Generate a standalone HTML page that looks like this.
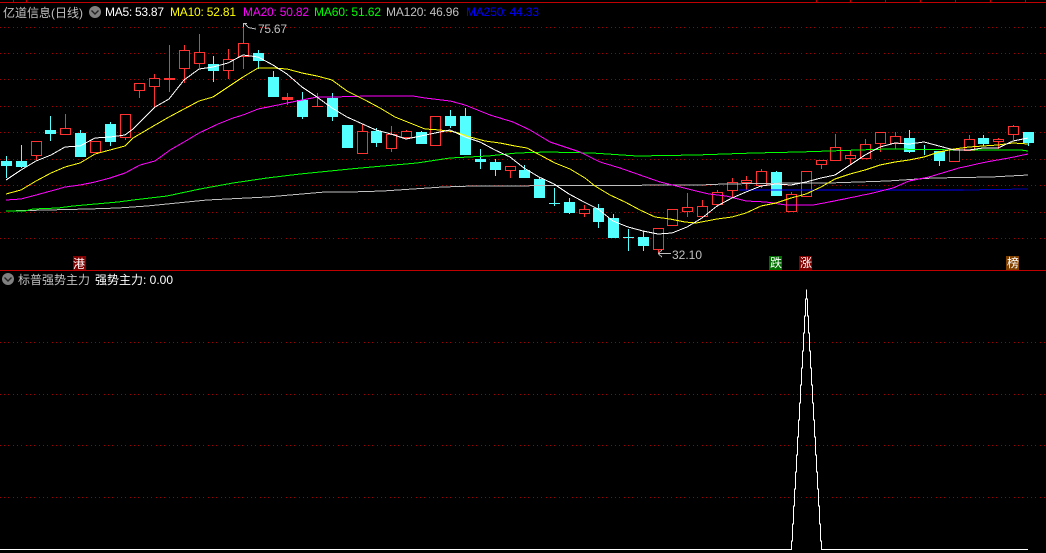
<!DOCTYPE html>
<html><head><meta charset="utf-8"><style>
html,body{margin:0;padding:0;background:#000;width:1046px;height:553px;overflow:hidden}
svg{display:block;position:absolute;left:0;top:0}
text{font-family:"Liberation Sans","WenQuanYi Zen Hei","Noto Sans CJK SC",sans-serif;font-size:12px}
</style></head><body>
<svg width="1046" height="553" viewBox="0 0 1046 553">
<rect width="1046" height="553" fill="#000"/>
<g stroke="#a00000" stroke-width="1" stroke-dasharray="1 3 1 3 1 4" shape-rendering="crispEdges" fill="none">
<path d="M0 27.5H1046M0 53.5H1046M0 79.5H1046M0 106.5H1046M0 132.5H1046M0 159.5H1046M0 185.5H1046M0 212.5H1046M0 238.5H1046M0 342.5H1046M0 394.5H1046M0 445.5H1046M0 497.5H1046"/>
</g>
<g stroke="#c00000" stroke-width="1" shape-rendering="crispEdges" fill="none">
<path d="M0 2.5H1046M0 270.5H1046M816.5 0V2M850.5 0V2M885.5 0V2M920.5 0V2M955.5 0V2M990.5 0V2M1025.5 0V2M13.5 0V2M26.5 0V2"/>
</g>
<g shape-rendering="crispEdges" stroke-width="1">
<path fill="none" stroke="#ff3232" d="M36.5 156V160M65.5 114V128M125.5 138V140M139.5 91V98M154.5 74V108M169.5 45V92M184.5 45V83M199.5 34V68M228.5 49V79M243.5 23V69M287.5 93V105M317.5 93V107M362.5 124V131M391.5 126V152M406.5 130V139M510.5 171V178M584.5 205V217M658.5 250V253M687.5 193V217M702.5 200V206M717.5 190V207M732.5 178V198M746.5 176V190M761.5 169V188M791.5 192V194M821.5 165V169M835.5 134V147M850.5 151V165M865.5 139V144M880.5 144V152M895.5 132V149M969.5 135V139M998.5 138V149M1013.5 125V140"/>
<path fill="none" stroke="#54ffff" d="M6.5 156V178M21.5 145V168M50.5 116V141M80.5 130V134M110.5 122V146M213.5 56V82M258.5 50V69M273.5 71V78M302.5 92V119M332.5 93V121M376.5 128V147M421.5 131V133M450.5 110V128M465.5 108V155M480.5 149V169M495.5 159V176M524.5 165V171M539.5 177V180M554.5 188V206M569.5 198V214M598.5 204V228M613.5 214V219M628.5 229V251M643.5 231V251M776.5 171V173M909.5 130V153M924.5 145V155M939.5 151V166M983.5 135V146M1028.5 132V146"/>
<g fill="#54ffff">
<rect x="1" y="161" width="11" height="5"/><rect x="16" y="161" width="11" height="6"/><rect x="45" y="130" width="11" height="4"/><rect x="75" y="133" width="11" height="24"/><rect x="105" y="124" width="11" height="18"/><rect x="208" y="64" width="11" height="7"/><rect x="253" y="53" width="11" height="8"/><rect x="268" y="77" width="11" height="20"/><rect x="297" y="100" width="11" height="17"/><rect x="327" y="98" width="11" height="19"/><rect x="342" y="125" width="11" height="23"/><rect x="371" y="131" width="11" height="12"/><rect x="416" y="132" width="11" height="12"/><rect x="445" y="116" width="11" height="10"/><rect x="460" y="116" width="11" height="39"/><rect x="475" y="159" width="11" height="3"/><rect x="490" y="162" width="11" height="8"/><rect x="519" y="170" width="11" height="8"/><rect x="534" y="179" width="11" height="19"/><rect x="549" y="203" width="11" height="1"/><rect x="564" y="202" width="11" height="11"/><rect x="593" y="208" width="11" height="14"/><rect x="608" y="218" width="11" height="20"/><rect x="623" y="237" width="11" height="1"/><rect x="638" y="237" width="11" height="9"/><rect x="771" y="172" width="11" height="24"/><rect x="904" y="138" width="11" height="14"/><rect x="934" y="151" width="11" height="10"/><rect x="978" y="138" width="11" height="6"/><rect x="1023" y="132" width="11" height="11"/>
</g>
<g fill="#000" stroke="#ff3232">
<rect x="31.5" y="141.5" width="10" height="14"/><rect x="60.5" y="128.5" width="10" height="6"/><rect x="90.5" y="141.5" width="10" height="11"/><rect x="120.5" y="114.5" width="10" height="23"/><rect x="134.5" y="83.5" width="10" height="7"/><rect x="149.5" y="78.5" width="10" height="8"/><rect x="179.5" y="50.5" width="10" height="18"/><rect x="194.5" y="52.5" width="10" height="11"/><rect x="223.5" y="59.5" width="10" height="11"/><rect x="238.5" y="43.5" width="10" height="13"/><rect x="357.5" y="131.5" width="10" height="22"/><rect x="386.5" y="134.5" width="10" height="14"/><rect x="401.5" y="131.5" width="10" height="6"/><rect x="430.5" y="116.5" width="10" height="29"/><rect x="505.5" y="166.5" width="10" height="4"/><rect x="579.5" y="209.5" width="10" height="4"/><rect x="653.5" y="228.5" width="10" height="21"/><rect x="667.5" y="209.5" width="10" height="16"/><rect x="682.5" y="207.5" width="10" height="4"/><rect x="697.5" y="206.5" width="10" height="10"/><rect x="712.5" y="192.5" width="10" height="12"/><rect x="727.5" y="182.5" width="10" height="8"/><rect x="741.5" y="180.5" width="10" height="2"/><rect x="756.5" y="171.5" width="10" height="14"/><rect x="786.5" y="194.5" width="10" height="17"/><rect x="801.5" y="171.5" width="10" height="25"/><rect x="816.5" y="160.5" width="10" height="4"/><rect x="830.5" y="147.5" width="10" height="13"/><rect x="845.5" y="155.5" width="10" height="3"/><rect x="860.5" y="144.5" width="10" height="14"/><rect x="875.5" y="132.5" width="10" height="11"/><rect x="890.5" y="136.5" width="10" height="7"/><rect x="949.5" y="149.5" width="10" height="12"/><rect x="964.5" y="139.5" width="10" height="11"/><rect x="993.5" y="139.5" width="10" height="2"/><rect x="1008.5" y="126.5" width="10" height="8"/>
</g>
<g fill="#ff3232">
<rect x="164" y="78" width="11" height="2"/><rect x="282" y="97" width="11" height="3"/><rect x="312" y="106" width="11" height="1"/>
</g>
</g>
<g fill="none" stroke-width="1" shape-rendering="crispEdges" stroke-linejoin="round">
<polyline stroke="#c0c0c0" points="6,211 88,209 118,208 147,206 177,203 207,200 267,197 325,192 350,192 383,191 443,187 473,186 700,185 724,184 796,183 829,183 888,181 933,178 991,177 1028,175"/>
<polyline stroke="#00ff00" points="6,211 25,211 33,209 58,208 73,206 118,202 133,200 167,196 200,189 233,183 267,178 300,174 350,169 383,166 417,163 450,158 488,156 517,153 547,152 592,153 637,156 696,155 725,154 754,153 799,152 829,151 888,149 963,150 1021,150 1028,151"/>
<polyline stroke="#0000ff" points="739,190 963,190"/>
<polyline stroke="#0000b0" points="963,190 1028,189"/>
<polyline stroke="#ff00ff" points="6,200 21,199 36,195 51,191 65,187 80,185 95,182 110,178 125,173 140,165 155,161 170,150 184,142 199,133 218,124 233,118 243,115 258,109 273,106 287,103 302,100 317,97 333,97 369,96 413,96 425,98 450,101 465,105 490,115 513,122 530,130 550,142 580,152 600,162 620,168 640,175 660,182 680,187 696,191 709,194 726,196 746,201 766,202 786,205 813,205 829,202 849,198 873,193 893,188 909,181 929,177 959,168 986,162 1009,158 1028,154"/>
<polyline stroke="#ffff00" points="6,194 21,190 36,181 51,173 65,167 80,163 95,154 110,150 125,146 133,138 150,128 169,117 184,109 199,101 213,97 228,87 243,77 258,68 273,68 287,69 302,73 317,76 332,80 347,91 365,100 380,108 395,117 410,123 425,129 440,130 455,132 470,137 485,141 500,143 515,146 527,148 540,155 555,163 570,169 585,178 595,186 610,195 625,202 640,210 655,217 670,219 685,222 696,223 717,219 732,217 746,213 761,206 776,203 791,198 806,194 821,187 835,179 850,174 865,170 880,165 895,162 909,160 924,157 939,152 954,149 969,147 983,146 998,145 1013,143 1028,144"/>
<polyline stroke="#ffffff" points="6,180 21,170 36,161 51,155 65,147 80,146 95,138 110,137 125,135 133,129 155,107 169,99 184,80 199,69 213,67 228,63 243,55 258,57 273,65 287,74 302,87 317,97 332,108 347,117 376,130 391,134 406,139 421,136 435,133 450,130 465,137 480,142 495,150 510,157 524,168 539,177 554,184 569,194 584,202 598,209 613,221 628,227 643,231 658,234 672,233 687,227 702,218 717,206 732,198 746,192 761,186 776,184 791,185 806,182 821,178 835,175 850,165 865,155 880,147 895,143 909,144 924,142 939,146 954,150 969,150 983,148 998,148 1013,141 1028,138"/>
<path stroke="#ffffff" d="M0 549.5H791.5V541H792.5V524H793.5V506H794.5V489H795.5V472H796.5V455H797.5V437H798.5V420H799.5V403H800.5V385H801.5V368H802.5V351H803.5V333H804.5V316H805.5V299H806.5V290V299H807.5V316H808.5V333H809.5V351H810.5V368H811.5V385H812.5V403H813.5V420H814.5V437H815.5V455H816.5V472H817.5V489H818.5V506H819.5V524H820.5V541H821.5V549.5H1028"/>
<path stroke="#c0c0c0" d="M244 23.5H247M243.5 23V27M245 24L248 27M248 27.5L256 29M658 253.5H671M658.5 253L662 250M658.5 254L662 257"/>
</g>
<text x="3" y="17" fill="#c0c0c0" font-size="12">亿道信息(日线)</text>
<circle cx="95" cy="12" r="6" fill="#808080"/><path d="M91.5 10.5L95 14L98.5 10.5" stroke="#222" stroke-width="1.4" fill="none"/>
<text x="105" y="16" fill="#ffffff" textLength="59">MA5: 53.87</text>
<text x="170" y="16" fill="#ffff00" textLength="66">MA10: 52.81</text>
<text x="243" y="16" fill="#ff00ff" textLength="66">MA20: 50.82</text>
<text x="314" y="16" fill="#00ff00" textLength="67">MA60: 51.62</text>
<text x="386" y="16" fill="#c0c0c0" textLength="73">MA120: 46.96</text>
<text x="466" y="16" fill="#0000ff" textLength="73">MA250: 44.33</text>
<text x="258" y="33" fill="#c0c0c0" textLength="29">75.67</text>
<text x="672" y="259" fill="#c0c0c0" textLength="30">32.10</text>
<rect x="73" y="256" width="13" height="14" fill="#800000"/><text x="73" y="268" fill="#fff">港</text>
<rect x="769" y="256" width="13" height="14" fill="#006f00"/><text x="770" y="267" fill="#fff">跌</text>
<rect x="799" y="256" width="13" height="14" fill="#800000"/><text x="800" y="267" fill="#fff">涨</text>
<rect x="1006" y="256" width="13" height="14" fill="#804000"/><text x="1007" y="267" fill="#fff">榜</text>
<circle cx="8" cy="279" r="6" fill="#808080"/><path d="M4.5 277.5L8 281L11.5 277.5" stroke="#222" stroke-width="1.4" fill="none"/>
<text x="18" y="284" fill="#c0c0c0">标普强势主力</text>
<text x="95" y="284" fill="#ffffff">强势主力: 0.00</text>
</svg>
</body></html>
